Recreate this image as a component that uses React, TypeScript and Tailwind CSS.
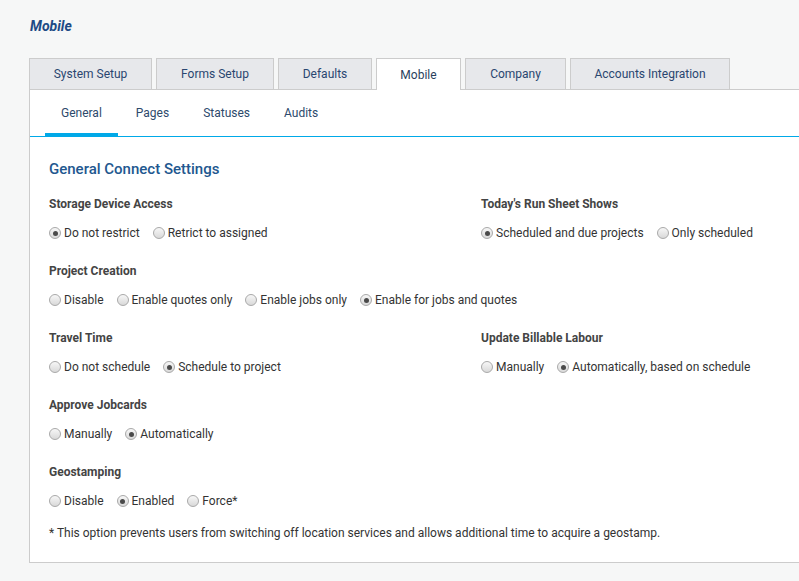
import { useState } from 'react';

type Option = { label: string; checked?: boolean };
type Setting = { title: string; options: Option[] };

const TABS = [
  { label: 'System Setup', width: 'w-[123px]' },
  { label: 'Forms Setup', width: 'w-[118px]' },
  { label: 'Defaults', width: 'w-[94px]' },
  { label: 'Mobile', width: 'w-[85px]' },
  { label: 'Company', width: 'w-[101px]' },
  { label: 'Accounts Integration', width: 'w-[160px]' },
];

const SUB_TABS = ['General', 'Pages', 'Statuses', 'Audits'];

const ROWS: [Setting, Setting | null][] = [
  [
    { title: 'Storage Device Access', options: [{ label: 'Do not restrict', checked: true }, { label: 'Retrict to assigned' }] },
    { title: "Today's Run Sheet Shows", options: [{ label: 'Scheduled and due projects', checked: true }, { label: 'Only scheduled' }] },
  ],
  [
    {
      title: 'Project Creation',
      options: [
        { label: 'Disable' },
        { label: 'Enable quotes only' },
        { label: 'Enable jobs only' },
        { label: 'Enable for jobs and quotes', checked: true },
      ],
    },
    null,
  ],
  [
    { title: 'Travel Time', options: [{ label: 'Do not schedule' }, { label: 'Schedule to project', checked: true }] },
    { title: 'Update Billable Labour', options: [{ label: 'Manually' }, { label: 'Automatically, based on schedule', checked: true }] },
  ],
  [{ title: 'Approve Jobcards', options: [{ label: 'Manually' }, { label: 'Automatically', checked: true }] }, null],
  [{ title: 'Geostamping', options: [{ label: 'Disable' }, { label: 'Enabled', checked: true }, { label: 'Force*' }] }, null],
];

function Radio({ checked }: { checked?: boolean }) {
  return (
    <span className="w-[12px] h-[12px] rounded-full border border-[#a9a9a9] bg-linear-to-b from-[#f7f7f7] to-[#d9d9d9] flex items-center justify-center shrink-0">
      {checked && <span className="w-[5px] h-[5px] rounded-full bg-[#4a4a4a]" />}
    </span>
  );
}

function SettingGroup({ setting }: { setting: Setting }) {
  return (
    <div>
      <p className="text-[12px] leading-[16px] font-bold text-[#444]">{setting.title}</p>
      <div className="flex gap-[13px] mt-[13px] whitespace-nowrap">
        {setting.options.map((o) => (
          <label key={o.label} className="flex items-center gap-[3px] text-[12px] leading-[16px] text-[#333]">
            <Radio checked={o.checked} />
            {o.label}
          </label>
        ))}
      </div>
    </div>
  );
}

function App() {
  const [tab] = useState('Mobile');
  const [sub] = useState('General');

  return (
    <div className="min-h-screen bg-[#f6f7f7] pt-[16px] pl-[29px] font-['Roboto',sans-serif] overflow-hidden">
      <h1 className="ml-[1px] text-[14px] leading-[20px] font-bold italic text-[#1d4a85]">Mobile</h1>
      <div className="flex items-end gap-[4px] mt-[21px] h-[32px]">
        {TABS.map((t) =>
          t.label === tab ? (
            <div
              key={t.label}
              className={`${t.width} h-[32px] -mb-[1px] relative z-10 bg-white border border-[#cccccc] border-b-0 flex items-center justify-center text-[12px] text-[#2a3f5c]`}
            >
              {t.label}
            </div>
          ) : (
            <div
              key={t.label}
              className={`${t.width} h-[31px] bg-[#e7e8eb] border border-[#cccccc] border-b-0 flex items-center justify-center text-[12px] text-[#2a4670]`}
            >
              {t.label}
            </div>
          ),
        )}
      </div>
      <div className="bg-white border-t border-l border-b border-[#cccccc] w-[800px]">
        <div className="flex gap-[2px] pl-[15px] border-b border-[#00a9e8] h-[47px] items-end">
          {SUB_TABS.map((s) => (
            <div
              key={s}
              className={`px-[16px] h-[40px] flex items-start pt-[8px] text-[12px] leading-[16px] text-[#2d4a6c] border-b-[4px] -mb-[1px] ${
                s === sub ? 'border-[#00a9e8]' : 'border-transparent'
              }`}
            >
              {s}
            </div>
          ))}
        </div>
        <div className="pl-[19px] pt-[22px] pb-[21px]">
          <h2 className="text-[15px] leading-[20px] font-medium text-[#22578f]">General Connect Settings</h2>
          <div className="mt-[17px] flex flex-col gap-[22px]">
            {ROWS.map(([left, right], i) => (
              <div key={i} className="grid grid-cols-[432px_1fr]">
                <SettingGroup setting={left} />
                {right ? <SettingGroup setting={right} /> : <div />}
              </div>
            ))}
          </div>
          <p className="mt-[16px] text-[12px] leading-[16px] text-[#333]">
            * This option prevents users from switching off location services and allows additional time to acquire a geostamp.
          </p>
        </div>
      </div>
    </div>
  );
}

export default App;
